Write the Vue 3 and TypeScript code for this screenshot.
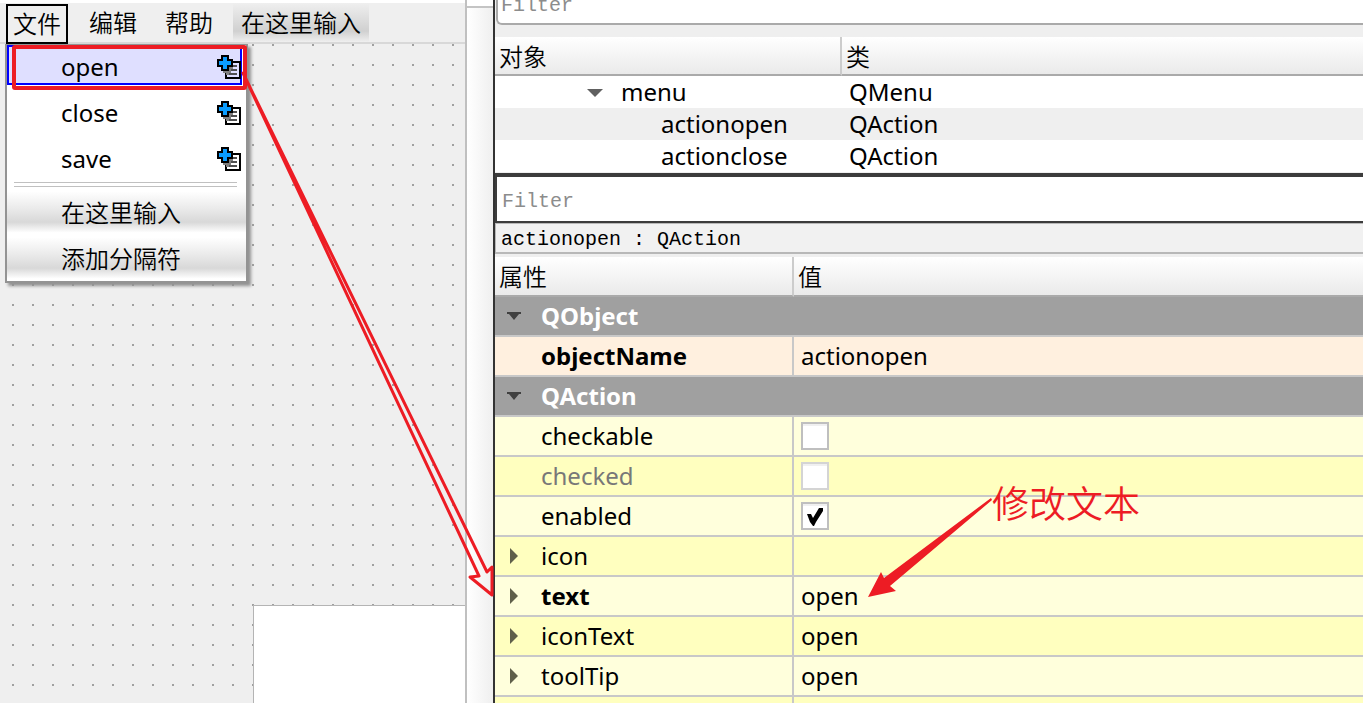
<script setup lang="ts">
import { ref } from 'vue'

interface Property {
  name: string
  kind: 'group' | 'text' | 'check'
  tone: string
  value?: string
  bold?: boolean
  expandable?: boolean
  disabled?: boolean
}

const menus = ['文件', '编辑', '帮助']
const actions = ['open', 'close', 'save']
const extras = ['在这里输入', '添加分隔符']

const objects = [
  { name: 'menu', type: 'QMenu', parent: true },
  { name: 'actionopen', type: 'QAction', parent: false },
  { name: 'actionclose', type: 'QAction', parent: false },
]

const properties: Property[] = [
  { name: 'QObject', kind: 'group', tone: 'group' },
  { name: 'objectName', kind: 'text', tone: 'peach', value: 'actionopen', bold: true },
  { name: 'QAction', kind: 'group', tone: 'group' },
  { name: 'checkable', kind: 'check', tone: 'pale' },
  { name: 'checked', kind: 'check', tone: 'strong', disabled: true },
  { name: 'enabled', kind: 'check', tone: 'pale' },
  { name: 'icon', kind: 'text', tone: 'strong', value: '', expandable: true },
  { name: 'text', kind: 'text', tone: 'pale', value: 'open', bold: true, expandable: true },
  { name: 'iconText', kind: 'text', tone: 'strong', value: 'open', expandable: true },
  { name: 'toolTip', kind: 'text', tone: 'pale', value: 'open', expandable: true },
  { name: '', kind: 'text', tone: 'strong', value: '' },
]

const checks = ref<Record<string, boolean>>({ checkable: false, checked: false, enabled: true })
const objectFilter = ref('')
const propertyFilter = ref('')
</script>

<template>
  <main class="designer">
    <section class="form-pane">
      <nav class="menubar">
        <button v-for="(m, i) in menus" :key="m" type="button" class="menu-title" :class="{ active: i === 0 }">{{ m }}</button>
        <button type="button" class="menu-title placeholder">在这里输入</button>
      </nav>
      <div class="canvas">
        <div class="child-widget"></div>
        <div class="popup">
          <button v-for="(a, i) in actions" :key="a" type="button" class="action" :class="{ selected: i === 0 }">
            <span>{{ a }}</span>
            <svg class="add-icon" viewBox="0 0 24 24" width="24" height="24" shape-rendering="crispEdges" aria-hidden="true">
              <rect x="9" y="7" width="14" height="16" class="page" />
              <path d="M14 11h6M14 15h6M12 19h8" class="lines" />
              <path d="M6 16h6v-4h4v2h-2v4h-2v2h-3v-2h-3z" class="shade" />
              <path d="M4 0h8v4h4v8h-4v4h-8v-4h-4v-8h4z" fill="#000" />
              <path d="M6 2h4v4h4v4h-4v4h-4v-4h-4v-4h4z" class="plus" />
            </svg>
          </button>
          <div class="separator"></div>
          <button v-for="e in extras" :key="e" type="button" class="action extra">{{ e }}</button>
        </div>
      </div>
    </section>

    <div class="splitter"></div>

    <section class="side">
      <div class="object-search">
        <input v-model="objectFilter" type="text" class="filter rounded" placeholder="Filter" aria-label="Object filter" />
      </div>
      <table class="objects">
        <colgroup><col class="object-col" /><col /></colgroup>
        <thead>
          <tr><th>对象</th><th>类</th></tr>
        </thead>
        <tbody>
          <tr v-for="o in objects" :key="o.name">
            <td :class="o.parent ? 'level-one' : 'level-two'">
              <button v-if="o.parent" type="button" class="twist" aria-label="Collapse menu">
                <svg width="16" height="8" viewBox="0 0 16 8"><path d="M0 0h16l-8 8z" fill="#606060" /></svg>
              </button>{{ o.name }}
            </td>
            <td>{{ o.type }}</td>
          </tr>
        </tbody>
      </table>
      <div class="property-search">
        <input v-model="propertyFilter" type="text" class="filter" placeholder="Filter" aria-label="Property filter" />
      </div>
      <div class="current">actionopen : QAction</div>
      <table class="properties">
        <colgroup><col class="property-col" /><col /></colgroup>
        <thead>
          <tr><th>属性</th><th>值</th></tr>
        </thead>
        <tbody>
          <tr v-for="p in properties" :key="p.name" :class="[p.tone, { bold: p.bold, disabled: p.disabled }]">
            <td :colspan="p.kind === 'group' ? 2 : 1">
              <div class="name">
                <span class="gutter">
                  <button v-if="p.kind === 'group'" type="button" class="twist" :aria-label="'Collapse ' + p.name">
                    <svg width="14" height="8" viewBox="0 0 14 8"><path d="M0 0h14v2h-2l-5 6l-5-6h-2z" fill="#404040" /></svg>
                  </button>
                  <button v-else-if="p.expandable" type="button" class="twist" :aria-label="'Expand ' + p.name">
                    <svg width="8" height="16" viewBox="0 0 8 16"><path d="M0 0v16l8-8z" fill="#60604a" /></svg>
                  </button>
                </span>
                <label v-if="p.kind === 'check'" :for="'prop-' + p.name">{{ p.name }}</label>
                <span v-else>{{ p.name }}</span>
              </div>
            </td>
            <td v-if="p.kind !== 'group'" class="value">
              <span v-if="p.kind === 'check'" class="check">
                <input :id="'prop-' + p.name" v-model="checks[p.name]" type="checkbox" :disabled="p.disabled" />
                <svg v-if="checks[p.name]" width="18" height="20" viewBox="0 0 18 20" aria-hidden="true">
                  <path d="M1 8h4l2 4l6-10h4v3l-7 11l-2 4h-1l-3-4z" fill="#000" />
                </svg>
              </span>
              <template v-else>{{ p.value }}</template>
            </td>
          </tr>
        </tbody>
      </table>
    </section>

    <svg class="marks" width="1363" height="703" viewBox="0 0 1363 703" aria-hidden="true">
      <rect x="14" y="47" width="231" height="41" rx="1" fill="none" stroke="#ed1c24" stroke-width="4" />
      <path d="M243 73L479 576L470 577L492 595V567L487 572Z" fill="none" stroke="#ed1c24" stroke-width="3" stroke-linejoin="round" />
      <path d="M868 597L881 572L884 578L991 498L992 500L890 586L896 591Z" fill="#ed1c24" />
    </svg>
    <span class="note">修改文本</span>
  </main>
</template>

<style>
body {
  margin: 0;
}
</style>

<style scoped>
.designer {
  position: relative;
  display: grid;
  grid-template-columns: 465px 28px minmax(0, 1fr);
  height: 100vh;
  overflow: hidden;
  background: #fff;
  color: #000;
  font-family: "Noto Sans", "Noto Sans CJK SC", sans-serif;
  font-size: 24px;
  line-height: 32px;
}
button,
input {
  margin: 0;
  padding: 0;
  border: 0;
  background: none;
  color: inherit;
  font: inherit;
}
.form-pane {
  display: flex;
  flex-direction: column;
  min-height: 0;
  padding-top: 3px;
}
.menubar {
  display: flex;
  gap: 12px;
  padding-left: 5px;
  height: 39px;
  background: #efefef;
  border-bottom: 2px solid #d8d8d8;
}
.menu-title,
.extra,
th,
.note {
  font-family: "Noto Sans CJK SC", sans-serif;
  font-weight: 350;
}
.menu-title {
  padding: 0 8px 2px;
}
.menu-title.active {
  margin: 1px 1px -2px;
  padding: 0 5px 2px;
  border: 2px solid #000;
}
.menu-title.placeholder {
  background: linear-gradient(#efefef, #d0d0d0 72%, #efefef);
}
.canvas {
  position: relative;
  flex: 1;
  background: conic-gradient(from 270deg at 2px 2px, #a0a0a0 90deg, #efefef 90deg) 12px 0 / 20px 20px;
}
.child-widget {
  position: absolute;
  left: 253px;
  top: 561px;
  right: 0;
  bottom: 0;
  border: solid #b4b4b4;
  border-width: 1px 0 0 1px;
  background: #fff;
}
.popup {
  position: absolute;
  left: 5px;
  top: 0;
  width: 239px;
  border: 2px solid #939393;
  border-top-width: 1px;
  background: #fff;
  box-shadow: 3px 3px 3px #909090;
}
.action {
  display: flex;
  align-items: center;
  justify-content: space-between;
  box-sizing: border-box;
  width: 235px;
  height: 46px;
  padding: 0 1px 1px 54px;
}
.action.selected {
  height: 40px;
  margin-bottom: 5px;
  padding: 4px 0 0 52px;
  border: 2px solid #00f;
  background: #dfdfff;
}
.selected .add-icon {
  margin-right: -1px;
}
.separator {
  height: 3px;
  margin: 0 9px 2px 7px;
  border: solid #c0c0c0;
  border-width: 1px 0;
}
.action.extra {
  width: 100%;
  background: linear-gradient(#fff 5%, #e9e9e9 45%, #d8d8d8 72%, #fff 95%);
}
.page {
  fill: #fff;
  stroke: #000;
  stroke-width: 2;
}
.selected .page {
  fill: #dfdfff;
}
.lines {
  stroke: #505050;
  stroke-width: 2;
}
.shade {
  fill: #808080;
}
.plus {
  fill: #0a9cff;
}
.splitter {
  box-sizing: border-box;
  border-left: 2px solid #c0c0c0;
  background: linear-gradient(#fff, #fff) 0 0 / 100% 6px no-repeat,
    linear-gradient(#c4c4c4, #c4c4c4) 0 6px / 100% 2px no-repeat,
    linear-gradient(90deg, #fff, #efefef);
}
.side {
  min-width: 0;
  border-left: 2px solid #333;
  background: #efefef;
}
.object-search {
  display: flex;
  height: 37px;
  padding-left: 1px;
}
.filter {
  box-sizing: border-box;
  width: 100%;
  background: #fff;
  font-family: "Liberation Mono", monospace;
  font-size: 20px;
}
.filter::placeholder {
  color: #8c8c8c;
  opacity: 1;
}
.filter.rounded {
  height: 41px;
  margin-top: -16px;
  padding: 2px 0 0 3px;
  border: 2px solid #aaa;
  border-right: 0;
  border-radius: 6px 0 0 6px;
}
table {
  width: 100%;
  table-layout: fixed;
  border-collapse: separate;
  border-spacing: 0;
}
.object-col {
  width: 347px;
}
.property-col {
  width: 299px;
}
th {
  box-sizing: border-box;
  height: 39px;
  padding: 0 4px;
  border-bottom: 2px solid #aaa;
  background: linear-gradient(#fff, #eaeaea);
  text-align: left;
}
th:first-child {
  border-right: 2px solid #ccc;
}
td {
  padding: 0;
  white-space: nowrap;
}
.objects tbody tr {
  height: 32px;
  background: #fff;
}
.objects tbody tr:nth-child(even) {
  background: #efefef;
}
.objects td:last-child {
  padding-left: 7px;
}
.level-one {
  padding-left: 92px;
}
.level-one .twist {
  margin-right: 18px;
}
.level-two {
  padding-left: 166px;
}
.twist svg {
  display: block;
}
.level-one .twist svg {
  margin-bottom: 4px;
}
.property-search {
  border: solid #3c3c3c;
  border-width: 4px 0 2px 2px;
  margin-top: 1px;
}
.property-search .filter {
  display: block;
  height: 44px;
  padding: 4px 0 0 5px;
}
.current {
  margin-bottom: 3px;
  padding: 4px 5px 0;
  border: solid #b8b8b8;
  border-width: 1px 0 2px 1px;
  background: #f1f1f1;
  font-family: "Liberation Mono", monospace;
  font-size: 20px;
  line-height: 24px;
}
.properties th {
  height: 40px;
}
.properties tbody td {
  box-sizing: border-box;
  height: 40px;
  border-bottom: 2px solid #c8c8c8;
}
.properties tbody td:first-child:not([colspan="2"]) {
  border-right: 2px solid #c8c8c8;
}
.properties .value {
  padding-left: 7px;
}
.name {
  display: flex;
  align-items: center;
}
.gutter {
  display: flex;
  justify-content: center;
  width: 38px;
  margin-right: 8px;
}
.group {
  background: #a0a0a0;
  color: #fff;
  font-weight: 700;
}
.peach {
  background: #fff0df;
}
.pale {
  background: #ffffdc;
}
.strong {
  background: #ffffbf;
}
.bold .name {
  font-weight: 700;
}
.disabled {
  color: #787878;
}
.check {
  position: relative;
  display: block;
  width: 28px;
  height: 28px;
}
.check input {
  appearance: none;
  display: block;
  box-sizing: border-box;
  width: 28px;
  height: 28px;
  border: 2px solid #bfbfbf;
  background: linear-gradient(#f0f0f0 2px, #fff 2px);
}
.check input:disabled {
  border-color: #d4d4d4;
}
.check svg {
  position: absolute;
  left: 5px;
  top: 4px;
}
.marks {
  position: absolute;
  left: 0;
  top: 0;
  pointer-events: none;
}
.note {
  position: absolute;
  left: 992px;
  top: 479px;
  color: #ed1c24;
  font-size: 37px;
  line-height: 46px;
}
</style>
